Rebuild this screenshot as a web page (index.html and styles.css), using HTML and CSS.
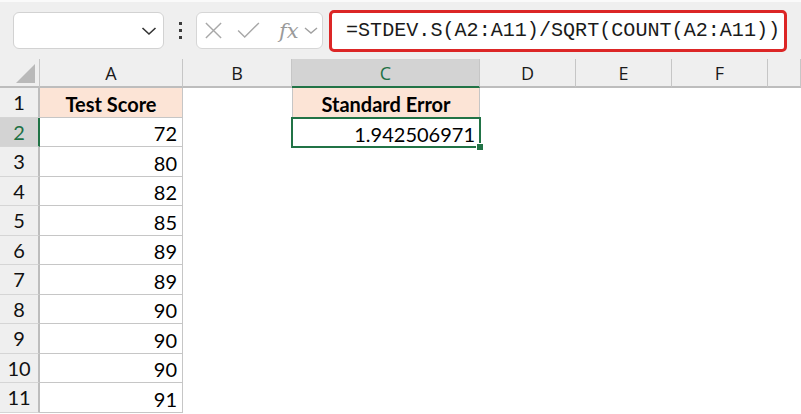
FILE: index.html
```html
<!DOCTYPE html>
<html lang="en">
<head>
  <meta charset="UTF-8">
  <title>Standard Error</title>
  <link rel="stylesheet" href="styles.css">
</head>
<body>

  <div class="ribbon-edge"></div>

  <div class="toolbar">
    <div class="name-box">
      <svg class="chevron" width="16" height="10" viewBox="0 0 16 10"><path d="M1.5 2 L8 8 L14.5 2" fill="none" stroke="#333" stroke-width="1.6"/></svg>
    </div>
    <div class="dots"><span></span><span></span><span></span></div>
    <div class="fx-box">
      <svg width="19" height="19" viewBox="0 0 20 20"><path d="M2 2 L18 18 M18 2 L2 18" stroke="#a8a8a8" stroke-width="1.5" fill="none"/></svg>
      <svg width="23" height="17" viewBox="0 0 24 18"><path d="M1 9 L8 16 L23 1" stroke="#a8a8a8" stroke-width="1.5" fill="none"/></svg>
      <span class="fx">fx</span>
      <svg width="14" height="9" viewBox="0 0 14 9"><path d="M1 2 L7 7 L13 2" fill="none" stroke="#a0a0a0" stroke-width="1.4"/></svg>
    </div>
    <div class="formula">=STDEV.S(A2:A11)/SQRT(COUNT(A2:A11))</div>
  </div>

  <div class="sheet">
    <div class="row head">
      <div class="corner"><span class="tri"></span></div>
      <div class="col">A</div>
      <div class="col">B</div>
      <div class="col sel">C</div>
      <div class="col">D</div>
      <div class="col">E</div>
      <div class="col">F</div>
      <div class="col"></div>
    </div>
    <div class="row">
      <div class="num">1</div>
      <div class="cell box title">Test Score</div>
      <div class="cell"></div>
      <div class="cell box title first">Standard Error</div>
      <div class="cell"></div><div class="cell"></div><div class="cell"></div><div class="cell"></div>
    </div>
    <div class="row">
      <div class="num sel">2</div>
      <div class="cell box">72</div>
      <div class="cell"></div>
      <div class="cell active">1.942506971</div>
      <div class="cell"></div><div class="cell"></div><div class="cell"></div><div class="cell"></div>
    </div>
    <div class="row">
      <div class="num">3</div>
      <div class="cell box">80</div>
      <div class="cell"></div><div class="cell"></div><div class="cell"></div><div class="cell"></div><div class="cell"></div><div class="cell"></div>
    </div>
    <div class="row">
      <div class="num">4</div>
      <div class="cell box">82</div>
      <div class="cell"></div><div class="cell"></div><div class="cell"></div><div class="cell"></div><div class="cell"></div><div class="cell"></div>
    </div>
    <div class="row">
      <div class="num">5</div>
      <div class="cell box">85</div>
      <div class="cell"></div><div class="cell"></div><div class="cell"></div><div class="cell"></div><div class="cell"></div><div class="cell"></div>
    </div>
    <div class="row">
      <div class="num">6</div>
      <div class="cell box">89</div>
      <div class="cell"></div><div class="cell"></div><div class="cell"></div><div class="cell"></div><div class="cell"></div><div class="cell"></div>
    </div>
    <div class="row">
      <div class="num">7</div>
      <div class="cell box">89</div>
      <div class="cell"></div><div class="cell"></div><div class="cell"></div><div class="cell"></div><div class="cell"></div><div class="cell"></div>
    </div>
    <div class="row">
      <div class="num">8</div>
      <div class="cell box">90</div>
      <div class="cell"></div><div class="cell"></div><div class="cell"></div><div class="cell"></div><div class="cell"></div><div class="cell"></div>
    </div>
    <div class="row">
      <div class="num">9</div>
      <div class="cell box">90</div>
      <div class="cell"></div><div class="cell"></div><div class="cell"></div><div class="cell"></div><div class="cell"></div><div class="cell"></div>
    </div>
    <div class="row">
      <div class="num">10</div>
      <div class="cell box">90</div>
      <div class="cell"></div><div class="cell"></div><div class="cell"></div><div class="cell"></div><div class="cell"></div><div class="cell"></div>
    </div>
    <div class="row">
      <div class="num">11</div>
      <div class="cell box">91</div>
      <div class="cell"></div><div class="cell"></div><div class="cell"></div><div class="cell"></div><div class="cell"></div><div class="cell"></div>
    </div>
  </div>

</body>
</html>
```

FILE: styles.css
```css
body {
  margin: 0;
  background: #fff;
  font-family: Lato, "Open Sans", sans-serif;
  color: #000;
  overflow: hidden;
}

.ribbon-edge {
  height: 2px;
  background: #fafafa;
  box-shadow: 0 1px 2px rgba(0,0,0,0.12);
}

.toolbar {
  display: flex;
  align-items: center;
  height: 57px;
  padding-left: 13px;
  background: #efefef;
}
.name-box {
  width: 151px;
  height: 37px;
  box-sizing: border-box;
  background: #fff;
  border: 1px solid #d2d2d2;
  border-radius: 6px;
  display: flex;
  align-items: center;
  justify-content: flex-end;
  padding-right: 6px;
}
.dots {
  width: 32px;
  display: flex;
  flex-direction: column;
  align-items: center;
  gap: 4px;
}
.dots span {
  width: 3px;
  height: 3px;
  background: #3c3c3c;
}
.fx-box {
  width: 127px;
  height: 37px;
  box-sizing: border-box;
  background: #fff;
  border: 1px solid #d6d6d6;
  border-radius: 6px;
  display: flex;
  align-items: center;
  gap: 14px;
  padding-left: 7px;
}
.fx-box .fx {
  font-family: "DejaVu Serif", "Liberation Serif", serif;
  font-style: italic;
  font-size: 21px;
  color: #9a9a9a;
  margin-left: 5px;
  margin-right: -9px;
}
.formula {
  margin-left: 6px;
  width: 458px;
  height: 42px;
  box-sizing: border-box;
  background: #fff;
  border: 3px solid #dc2626;
  border-radius: 5px;
  display: flex;
  align-items: center;
  padding-left: 14px;
  font-family: "Liberation Mono", "DejaVu Sans Mono", monospace;
  font-size: 20.1px;
  color: #1a1a1a;
}

.row {
  display: grid;
  grid-template-columns: 40px 143px 109px 188px 96px 96px 96px 1fr;
  height: 29.5px;
}
.row.head {
  height: 29px;
  background: #efefef;
}
.corner {
  position: relative;
  border-right: 1px solid #c6c6c6;
  border-bottom: 2px solid #bdbdbd;
}
.corner .tri {
  position: absolute;
  right: 4px;
  bottom: 3px;
  width: 0;
  height: 0;
  border-left: 19px solid transparent;
  border-bottom: 19px solid #b9b9b9;
}
.col {
  display: flex;
  align-items: center;
  justify-content: center;
  border-right: 1px solid #c6c6c6;
  border-bottom: 2px solid #bdbdbd;
  font-family: "Open Sans", "Noto Sans", sans-serif;
  font-size: 18px;
  color: #1a1a1a;
}
.col.sel {
  background: #d3d3d3;
  color: #1e7145;
  border-bottom-color: #217346;
}
.num {
  display: flex;
  align-items: center;
  justify-content: center;
  background: #efefef;
  border-right: 2px solid #bdbdbd;
  border-bottom: 1px solid #d5d5d5;
  font-size: 20px;
  color: #111;
}
.num.sel {
  background: #d3d3d3;
  color: #1e7145;
  border-right-color: #217346;
}
.cell {
  display: flex;
  align-items: flex-end;
  justify-content: flex-end;
  padding: 0 5px 3px 0;
  font-size: 20px;
  line-height: 1;
}
.cell.box {
  border-right: 1px solid #c6c6c6;
  border-bottom: 1px solid #c6c6c6;
}
.cell.first {
  border-left: 1px solid #c6c6c6;
}
.cell.title {
  background: #fce4d6;
  justify-content: center;
  font-weight: bold;
  padding-right: 0;
}
.cell.active {
  position: relative;
  outline: 2px solid #217346;
  outline-offset: -1px;
}
.cell.active::after {
  content: "";
  position: absolute;
  right: -4px;
  bottom: -4px;
  width: 6px;
  height: 6px;
  background: #217346;
  border: 1px solid #fff;
}
```
